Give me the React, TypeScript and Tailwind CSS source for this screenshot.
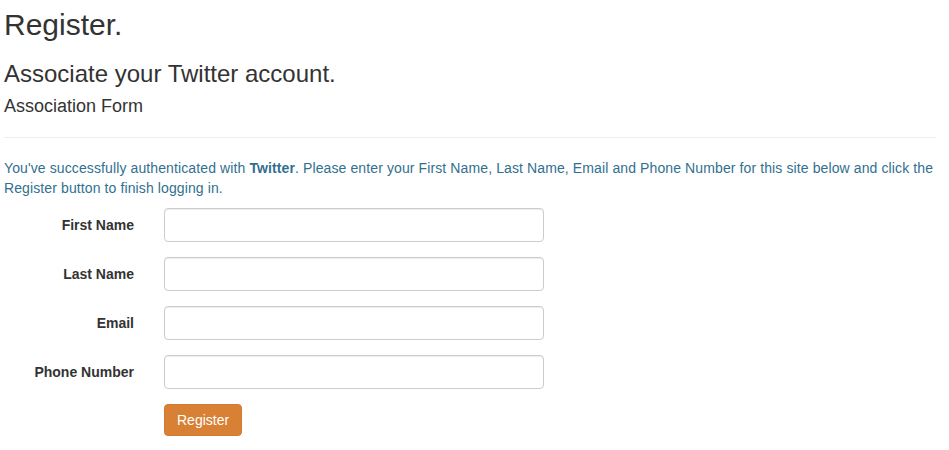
export default function App() {
  const fields = ["First Name", "Last Name", "Email", "Phone Number"]

  return (
    <div className="min-h-screen bg-white pl-[4px] pr-[13px] pt-[8px] text-[14px] leading-[20px] text-[#333] font-['Liberation_Sans',Arial,sans-serif]">
      {/* Headings */}
      <h2 className="text-[30px] leading-[33px]">Register.</h2>
      <h3 className="mt-[20px] text-[24px] leading-[26.4px]">Associate your Twitter account.</h3>
      <h4 className="mt-[10px] text-[18px] leading-[19.8px]">Association Form</h4>
      <hr className="mt-[20px] mb-[20px] border-t border-[#eee]" />

      <p className="mb-[10px] tracking-[0.11px] text-[#31708f]">
        You've successfully authenticated with <strong>Twitter</strong>. Please enter your First Name, Last Name, Email
        and Phone Number for this site below and click the Register button to finish logging in.
      </p>

      {/* Form */}
      <form className="flex flex-col gap-[15px]">
        {fields.map((label) => (
          <div key={label} className="flex items-start gap-[30px]">
            <label className="w-[130px] pt-[7px] text-right font-bold">{label}</label>
            <input
              type="text"
              className="h-[34px] w-[380px] rounded-[4px] border border-[#ccc] px-[12px] py-[6px] shadow-[inset_0_1px_1px_rgba(0,0,0,0.075)] outline-none"
            />
          </div>
        ))}
        <div className="flex gap-[30px]">
          <div className="w-[130px]" />
          <button
            type="button"
            className="h-[32px] rounded-[4px] border border-[#d27a2d] bg-[#d88033] px-[12px] text-white"
          >
            Register
          </button>
        </div>
      </form>
    </div>
  )
}
